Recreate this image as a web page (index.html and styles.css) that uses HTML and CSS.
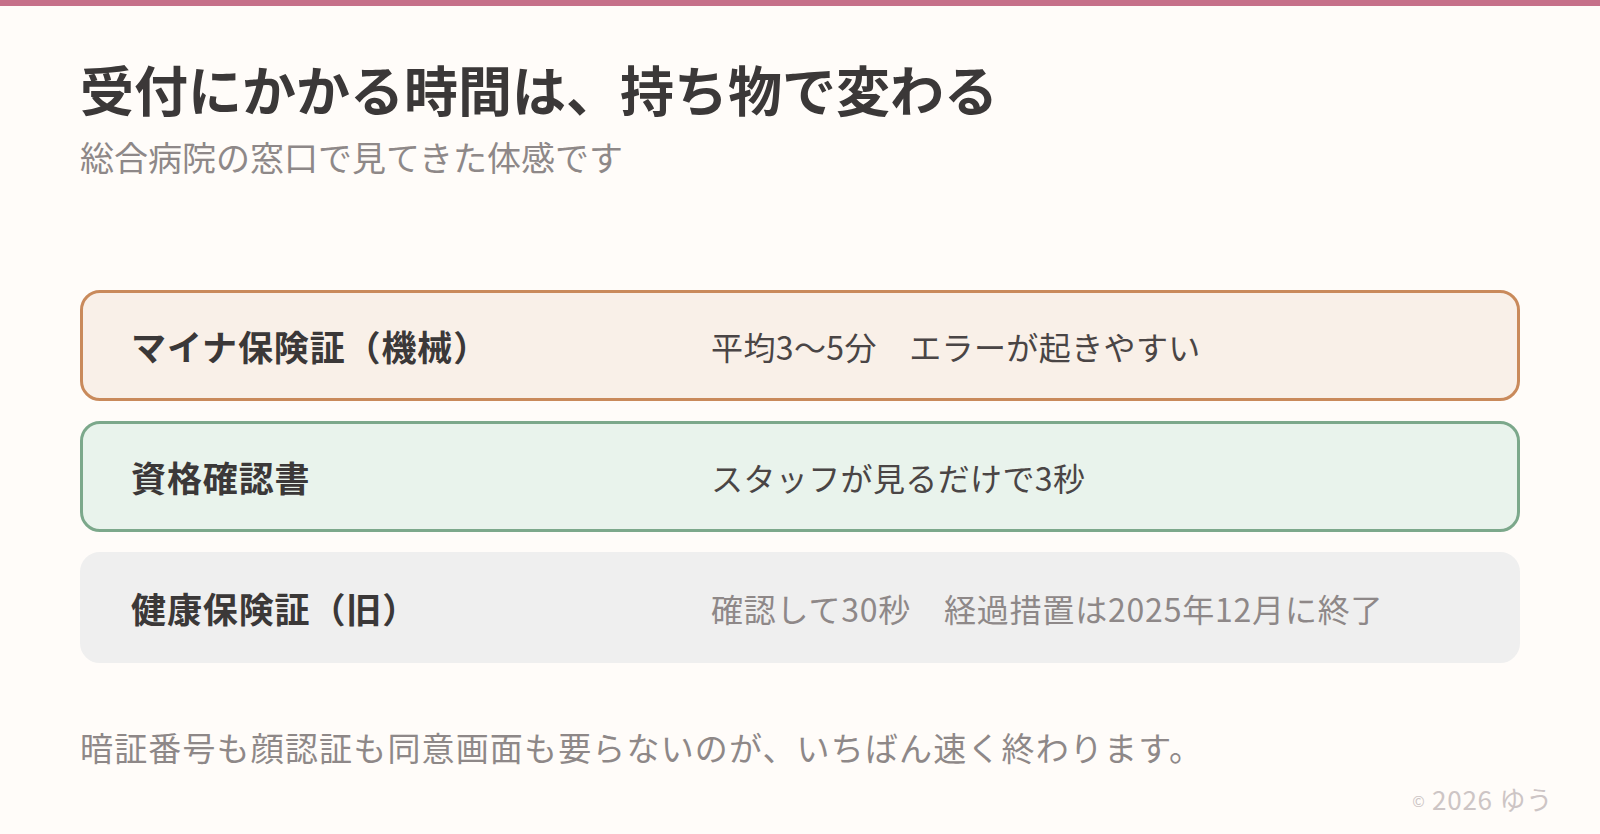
FILE: index.html
```html
<!DOCTYPE html>
<html lang="ja">
<head>
<meta charset="utf-8">
<title>受付にかかる時間は、持ち物で変わる</title>
<link rel="stylesheet" href="styles.css">
</head>
<body>
<div class="topbar"></div>
<main class="page">
  <header class="head">
    <h1 class="title">受付にかかる時間は、持ち物で変わる</h1>
    <p class="subtitle">総合病院の窓口で見てきた体感です</p>
  </header>
  <section class="list">
    <div class="row row-mynumber">
      <div class="label">マイナ保険証（機械）</div>
      <div class="value">平均3～5分　エラーが起きやすい</div>
    </div>
    <div class="row row-cert">
      <div class="label">資格確認書</div>
      <div class="value">スタッフが見るだけで3秒</div>
    </div>
    <div class="row row-old">
      <div class="label">健康保険証（旧）</div>
      <div class="value">確認して30秒　経過措置は2025年12月に終了</div>
    </div>
  </section>
  <p class="note">暗証番号も顔認証も同意画面も要らないのが、いちばん速く終わります。</p>
  <footer class="credit"><span class="copy">©</span> 2026 ゆう</footer>
</main>
</body>
</html>
```

FILE: styles.css
```css
* { box-sizing: border-box; }
html, body { margin: 0; padding: 0; }
body {
  width: 1600px;
  height: 834px;
  overflow: hidden;
  background: #fffcf9;
  font-family: "Noto Sans CJK JP", "Noto Sans", sans-serif;
  color: #3b3838;
}
.topbar {
  height: 6px;
  background: #c6708a;
}
.page {
  padding: 0 80px;
  display: flex;
  flex-direction: column;
}
.head {
  padding-top: 47px;
}
.title {
  margin: 0;
  font-size: 54px;
  line-height: 72px;
  font-weight: 700;
  color: #3b3838;
}
.subtitle {
  margin: 8px 0 0;
  font-size: 34px;
  line-height: 48px;
  letter-spacing: 0;
  color: #8e8888;
  font-weight: 400;
}
.list {
  margin-top: 109px;
  display: flex;
  flex-direction: column;
  gap: 20px;
}
.row {
  height: 111px;
  border: 3px solid transparent;
  border-radius: 20px;
  padding: 0 48px;
  display: grid;
  grid-template-columns: 580px 1fr;
  align-items: center;
}
.label {
  font-size: 35px;
  font-weight: 700;
  color: #3b3838;
  letter-spacing: 0.025em;
}
.value {
  font-size: 32px;
  color: #4a4545;
  letter-spacing: 0.012em;
}
.row-mynumber {
  background: #f9f0e8;
  border-color: #c98a5b;
}
.row-cert {
  background: #e9f3ec;
  border-color: #7ca88b;
}
.row-old {
  background: #efefef;
  border-color: #efefef;
}
.row-old .value {
  color: #8e8888;
  letter-spacing: 0.025em;
}
.note {
  margin: 60px 0 0;
  font-size: 33px;
  line-height: 48px;
  color: #8e8888;
  letter-spacing: 0.035em;
}
.credit {
  align-self: flex-end;
  margin: 12px -33px 0 0;
  font-size: 26px;
  line-height: 32px;
  letter-spacing: 0.03em;
  color: #cdc5c5;
}
.copy {
  font-size: 15px;
  vertical-align: 3px;
}
```
